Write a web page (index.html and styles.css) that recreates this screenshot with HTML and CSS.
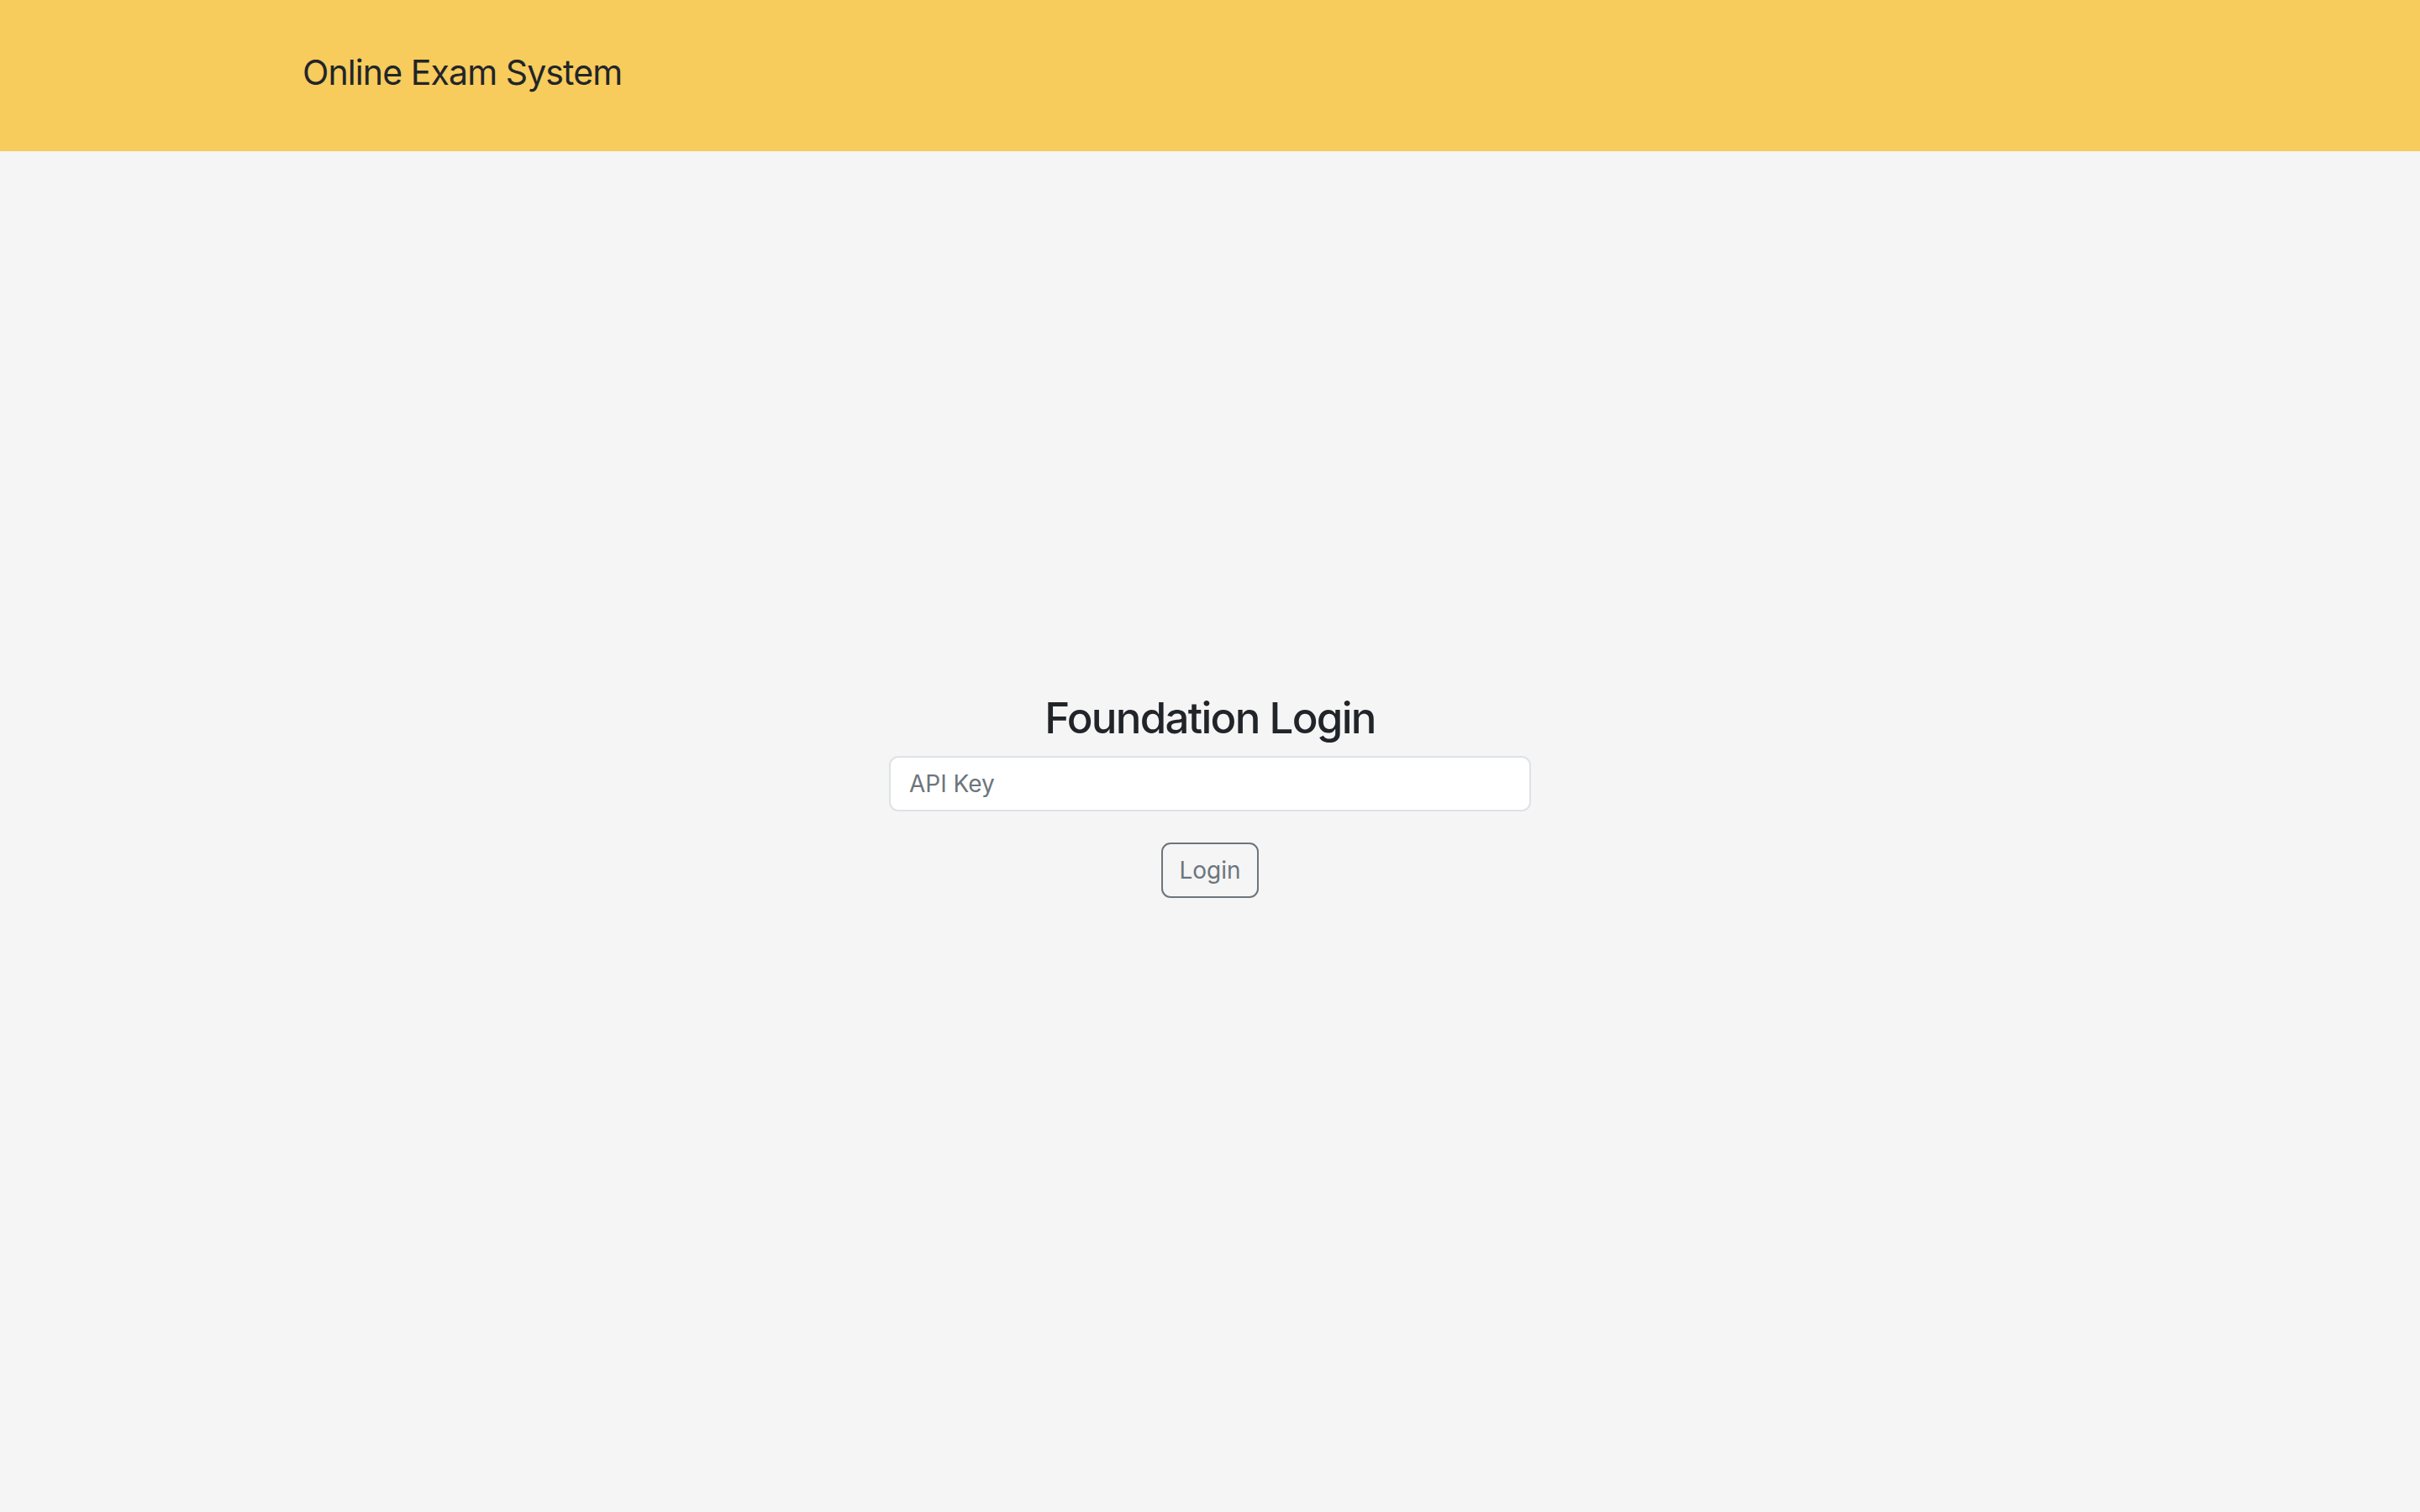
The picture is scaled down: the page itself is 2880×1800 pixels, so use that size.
FILE: index.html
```html
<!DOCTYPE html>
<html lang="en">
<head>
<meta charset="utf-8">
<title>Online Exam System</title>
<link rel="stylesheet" href="styles.css">
</head>
<body>
<header class="topbar">
  <div class="brand">Online Exam System</div>
</header>
<main class="main">
  <form class="login">
    <h3 class="login-title">Foundation Login</h3>
    <input class="field" type="text" placeholder="API Key">
    <button class="btn" type="button">Login</button>
  </form>
</main>
</body>
</html>
```
FILE: styles.css
```css
html, body {
  margin: 0;
  padding: 0;
}
body {
  background: #f5f5f5;
  color: #212529;
  font-family: Inter, "Noto Sans", sans-serif;
  min-height: 1800px;
}
.topbar {
  background: #f7cb5c;
  height: 180px;
  display: flex;
  align-items: center;
  padding-left: 360px;
  padding-bottom: 8px;
  box-sizing: border-box;
}
.brand {
  font-size: 41px;
  line-height: 1;
  color: #212529;
  letter-spacing: -0.9px;
}
.main {
  display: flex;
  justify-content: center;
  padding-top: 644px;
}
.login {
  display: flex;
  flex-direction: column;
  align-items: center;
  width: 764px;
}
.login-title {
  margin: 0 0 15px;
  font-size: 51px;
  font-weight: 500;
  line-height: 1.2;
  letter-spacing: -1.7px;
  color: #212529;
}
.field {
  box-sizing: border-box;
  width: 764px;
  height: 66px;
  padding: 0 22px;
  font-family: inherit;
  font-size: 28px;
  color: #212529;
  background: #fff;
  border: 2px solid #dee2e6;
  border-radius: 11px;
  outline: none;
}
.field::placeholder {
  color: #6c757d;
}
.btn {
  margin-top: 37px;
  box-sizing: border-box;
  width: 116px;
  height: 66px;
  padding: 0;
  font-family: inherit;
  font-size: 28px;
  color: #6c757d;
  background: transparent;
  border: 2px solid #6c757d;
  border-radius: 11px;
}
```
